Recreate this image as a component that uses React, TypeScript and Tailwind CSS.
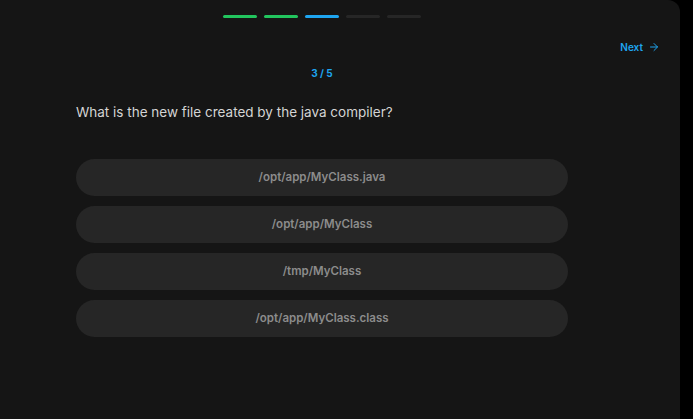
import { ArrowRight } from 'lucide-react'

const steps = ['done', 'done', 'current', 'todo', 'todo']

const options = [
  '/opt/app/MyClass.java',
  '/opt/app/MyClass',
  '/tmp/MyClass',
  '/opt/app/MyClass.class',
]

export default function App() {
  return (
    <div className="h-[419px] w-[693px] bg-black overflow-hidden" style={{ fontFamily: 'Inter, "Noto Sans", sans-serif' }}>
      <div className="h-full w-[680px] bg-[#151515] rounded-tr-xl">
        {/* Progress */}
        <div className="w-[644px] flex justify-center gap-[7px] pt-[15px]">
          {steps.map((s, i) => (
            <div
              key={i}
              className={
                'h-[3px] w-[34px] rounded-full ' +
                (s === 'done' ? 'bg-[#22c55e]' : s === 'current' ? 'bg-[#1ea5f0]' : 'bg-[#262626]')
              }
            />
          ))}
        </div>

        {/* Next */}
        <div className="flex justify-end pr-[20px] mt-[22px]">
          <button className="flex items-center gap-[5px] text-[10px] font-semibold text-[#1ea5f0] leading-[14px]">
            Next
            <ArrowRight className="w-[12px] h-[12px]" strokeWidth={2} />
          </button>
        </div>

        <div className="w-[644px] flex flex-col items-center">
          <div className="mt-[12px] text-[10px] font-bold text-[#1ea5f0] leading-[14px]">3 / 5</div>

          <div className="w-[492px] mt-[22px] text-[13.5px] text-[#d4d4d4] leading-[20px]">
            What is the new file created by the java compiler?
          </div>

          <div className="w-[492px] mt-[37px] flex flex-col gap-[10px]">
            {options.map((o) => (
              <button
                key={o}
                className="h-[37px] w-full rounded-full bg-[#262626] text-[11.5px] font-semibold text-[#8c8c8c]"
              >
                {o}
              </button>
            ))}
          </div>
        </div>
      </div>
    </div>
  )
}
